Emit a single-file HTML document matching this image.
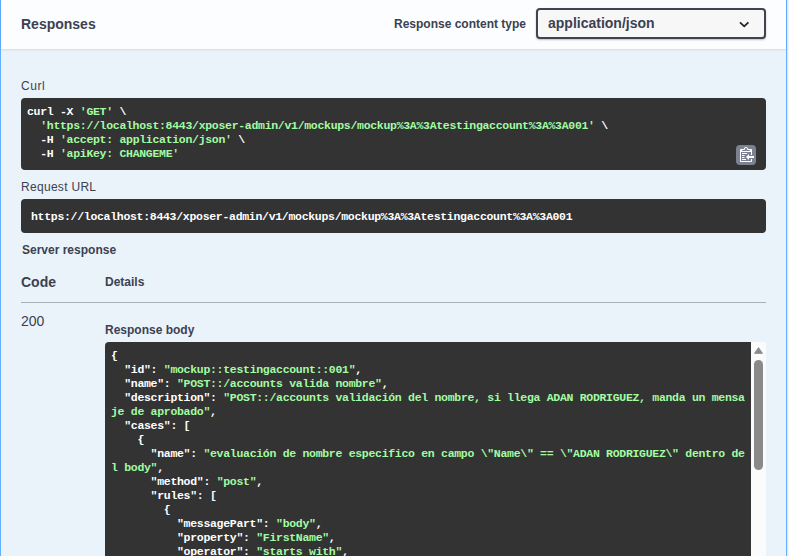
<!DOCTYPE html>
<html><head><meta charset="utf-8">
<style>
html,body{margin:0;padding:0;background:#fafafa;width:789px;height:556px;overflow:hidden;}
body{position:relative;font-family:"Liberation Sans",sans-serif;color:#3b4151;}
.opblock{position:absolute;left:0;top:-10px;width:785px;height:600px;border:1px solid #61affe;background:#ebf3fa;box-shadow:0 0 3px rgba(0,0,0,.19);}
.hdr{position:absolute;left:1px;top:0;width:785px;height:49px;background:rgba(255,255,255,.8);box-shadow:0 1px 2px rgba(0,0,0,.1);}
.abs{position:absolute;white-space:pre;}
.h14b{font-size:14px;font-weight:700;line-height:16px;}
.h12b{font-size:12px;font-weight:700;line-height:14px;}
.h12{font-size:12px;font-weight:400;line-height:14px;}
.sel{position:absolute;left:536px;top:8px;width:226px;height:27px;border:2px solid #41444e;border-radius:4px;background:#f7f7f7;box-shadow:0 1px 2px 0 rgba(0,0,0,.25);box-sizing:content-box;}
.pre{position:absolute;background:#333;border-radius:4px;color:#fff;font-family:"Liberation Mono",monospace;font-weight:700;font-size:11.5px;letter-spacing:-0.3px;line-height:14px;white-space:pre;}
.g{color:#a2fca2;}
.copy{position:absolute;width:20px;height:20px;background:#7d8293;border-radius:4px;}
.sb{position:absolute;left:751px;top:342px;width:15px;height:230px;background:#fbfbfb;}
.line{position:absolute;left:21px;top:302px;width:745px;height:1px;background:rgba(59,65,81,.38);}
</style></head><body>
<div class="opblock"></div>
<div class="hdr"></div>
<div class="abs h14b" style="left:21px;top:16px;">Responses</div>
<div class="abs h12b" style="left:394px;top:17px;">Response content type</div>
<div class="sel"><div class="abs h14b" style="left:10px;top:5px;">application/json</div>
<svg style="position:absolute;left:200px;top:11px" width="12" height="9" viewBox="0 0 12 9"><path d="M2 1.4 L6.2 5.3 L10.4 1.4" fill="none" stroke="#222" stroke-width="1.8"/></svg>
</div>

<div class="abs h12" style="left:21px;top:79px;letter-spacing:0.55px;">Curl</div>
<div class="pre" style="left:21px;top:98px;width:745px;height:72px;"><div class="abs" style="left:6px;top:7px;">curl -X <span class="g">'GET'</span> \
  <span class="g">'https://localhost:8443/xposer-admin/v1/mockups/mockup%3A%3Atestingaccount%3A%3A001'</span> \
  -H <span class="g">'accept: application/json'</span> \
  -H <span class="g">'apiKey: CHANGEME'</span></div>
<div class="copy" style="left:715px;top:47px;"><svg style="position:absolute;left:4px;top:1px" width="14" height="16" viewBox="0 0 14 16"><path fill="#fff" fill-rule="evenodd" d="M2 13h4v1H2v-1zm5-6H2v1h5V7zm2 3V8l-3 3 3 3v-2h5v-2H9zM4.5 9H2v1h2.5V9zM2 12h2.5v-1H2v1zm9 1h1v2c-.02.28-.11.52-.3.7-.19.18-.42.28-.7.3H1c-.55 0-1-.45-1-1V4c0-.55.45-1 1-1h3c0-1.11.89-2 2-2 1.11 0 2 .89 2 2h3c.55 0 1 .45 1 1v5h-1V6H1v9h10v-2zM2 5h8c0-.55-.45-1-1-1H8c-.55 0-1-.45-1-1s-.45-1-1-1-1 .45-1 1-.45 1-1 1H3c-.55 0-1 .45-1 1z"/></svg></div>
</div>

<div class="abs h12" style="left:21px;top:180px;letter-spacing:0.3px;">Request URL</div>
<div class="pre" style="left:21px;top:199px;width:745px;height:34px;"><div class="abs" style="left:10px;top:11px;">https://localhost:8443/xposer-admin/v1/mockups/mockup%3A%3Atestingaccount%3A%3A001</div></div>

<div class="abs h12b" style="left:22px;top:243px;">Server response</div>
<div class="abs h14b" style="left:21px;top:274px;">Code</div>
<div class="abs h12b" style="left:105px;top:275px;">Details</div>
<div class="line"></div>
<div class="abs" style="left:21px;top:313px;font-size:14px;line-height:16px;">200</div>
<div class="abs h12b" style="left:105px;top:323px;">Response body</div>

<div class="pre" style="left:105px;top:342px;width:646px;height:230px;border-radius:4px 0 0 4px;"><div class="abs" style="left:6px;top:7px;">{
  "id": <span class="g">"mockup::testingaccount::001"</span>,
  "name": <span class="g">"POST::/accounts valida nombre"</span>,
  "description": <span class="g">"POST::/accounts validación del nombre, si llega ADAN RODRIGUEZ, manda un mensa
je de aprobado"</span>,
  "cases": [
    {
      "name": <span class="g">"evaluación de nombre especifico en campo \"Name\" == \"ADAN RODRIGUEZ\" dentro de
l body"</span>,
      "method": <span class="g">"post"</span>,
      "rules": [
        {
          "messagePart": <span class="g">"body"</span>,
          "property": <span class="g">"FirstName"</span>,
          "operator": <span class="g">"starts with"</span>,
          "value": <span class="g">"ADAN"</span>
</div></div>
<div class="sb"><svg style="position:absolute;left:3px;top:5px" width="9" height="7" viewBox="0 0 9 7"><path d="M4.5 0.6 L8.6 6.4 L0.4 6.4 Z" fill="#8a8a8a" stroke="#8a8a8a" stroke-width="0.8" stroke-linejoin="round"/></svg><div style="position:absolute;left:3px;top:18px;width:9px;height:110px;border-radius:4.5px;background:#8a8a8a;"></div></div>
</body></html>
